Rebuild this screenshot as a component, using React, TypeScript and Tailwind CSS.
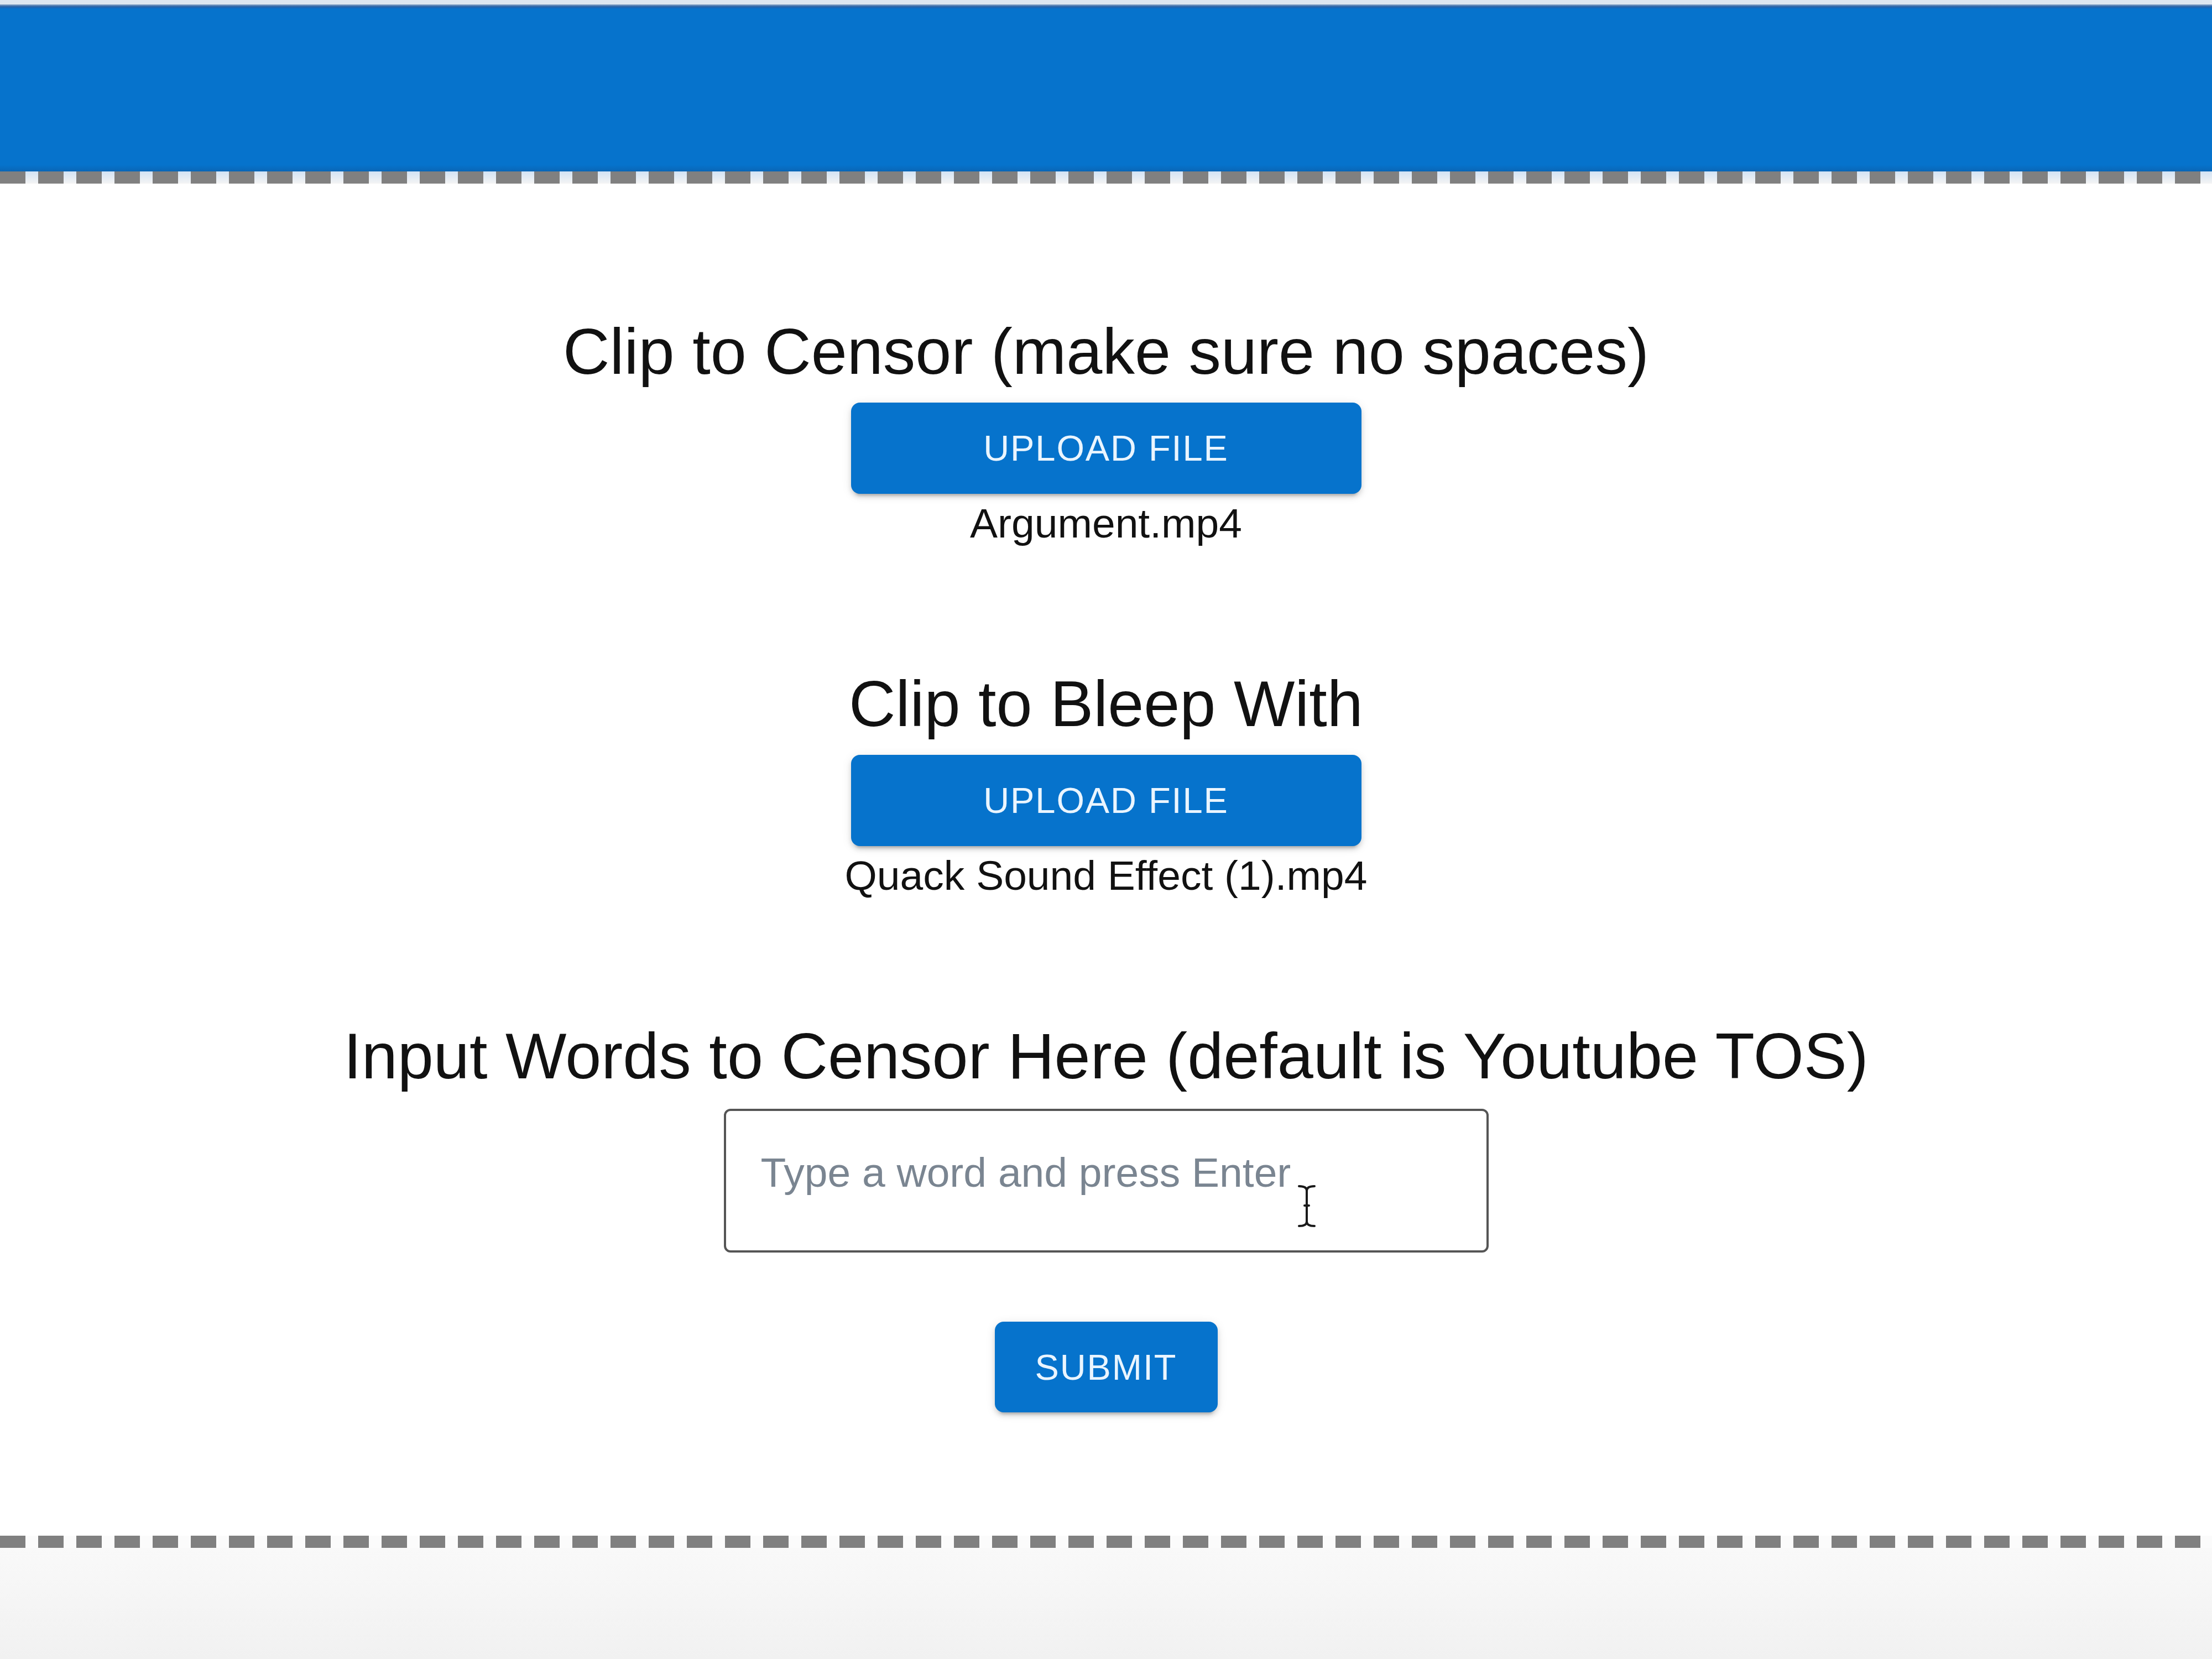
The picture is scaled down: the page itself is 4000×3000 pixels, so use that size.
import React from 'react';

// Dashed divider used above and below the form area
const Dashes: React.FC<{ backdrop: string }> = ({ backdrop }) => (
  <div className={`h-[22px] w-full ${backdrop}`}>
    <div className="h-full w-full bg-[repeating-linear-gradient(90deg,#808080_0_46px,transparent_46px_69px)]" />
  </div>
);

const UploadButton: React.FC<{ label: string; className?: string }> = ({ label, className }) => (
  <button
    type="button"
    className={`flex items-center justify-center rounded-[16px] bg-[#0673cc] text-[65px] leading-none tracking-[1.9px] text-[#eaf5ff] shadow-[0_10px_4px_-7px_rgba(0,0,0,0.18),0_6px_8px_0_rgba(0,0,0,0.12),0_3px_18px_0_rgba(0,0,0,0.1)] ${className ?? ''}`}
  >
    {label}
  </button>
);

const ClipSection: React.FC<{ title: string; fileName: string }> = ({ title, fileName }) => (
  <section className="flex flex-col items-center">
    <h2 className="text-[117px] leading-[140px] text-[#111111]">{title}</h2>
    <UploadButton label="UPLOAD FILE" className="mt-[22px] h-[165px] w-[923px]" />
    <p className="mt-[8px] text-[75px] leading-[90px] text-[#111111]">{fileName}</p>
  </section>
);

// Mouse text cursor that sits over the input in the capture
const IBeam: React.FC = () => (
  <svg
    width="36"
    height="78"
    viewBox="0 0 36 78"
    className="pointer-events-none absolute left-[1036px] top-[137px]"
    fill="none"
    stroke="#1a1a1a"
    strokeWidth="4"
    strokeLinecap="round"
  >
    <path d="M4 3 Q18 3 18 11 Q18 3 32 3" />
    <path d="M18 10 V68" />
    <path d="M14 38 H22" />
    <path d="M4 75 Q18 75 18 67 Q18 75 32 75" />
  </svg>
);

const App: React.FC = () => {
  return (
    <div className="w-[4000px] h-[3000px] overflow-hidden bg-white font-[family-name:'Liberation_Sans',Arial,Helvetica,sans-serif]">
      {/* Header bar */}
      <div className="h-[8px] bg-[#dde6f0]" />
      <div className="h-[8px] bg-[linear-gradient(#8ea8c8,#2a62a6,#0670cb)]" />
      <div className="h-[294px] bg-[linear-gradient(#0673cc_0,#0673cc_96%,#0a66b6_100%)]" />
      <Dashes backdrop="bg-[linear-gradient(#d3e3f4,#f4f4f4)]" />

      {/* Form */}
      <main className="flex h-[2445px] flex-col items-center pt-[234px]">
        <ClipSection title="Clip to Censor (make sure no spaces)" fileName="Argument.mp4" />
        <div className="mt-[212px]">
          <ClipSection title="Clip to Bleep With" fileName="Quack Sound Effect (1).mp4" />
        </div>

        <section className="mt-[212px] flex flex-col items-center">
          <h2 className="text-[117px] leading-[140px] text-[#111111]">
            Input Words to Censor Here (default is Youtube TOS)
          </h2>
          <div className="relative mt-[25px]">
            <input
              type="text"
              placeholder="Type a word and press Enter"
              className="box-border h-[260px] w-[1383px] rounded-[12px] border-[4px] border-[#555555] bg-white pb-[30px] pl-[63px] pr-[40px] text-[75px] text-[#222222] outline-none placeholder:text-[#7a8591]"
            />
            <IBeam />
          </div>
          <UploadButton label="SUBMIT" className="mt-[125px] h-[164px] w-[403px]" />
        </section>
      </main>

      <Dashes backdrop="bg-[#fbfbfb]" />
      <div className="h-[201px] bg-[linear-gradient(#f9f9f9,#f1f1f1)]" />
    </div>
  );
};

export default App;
